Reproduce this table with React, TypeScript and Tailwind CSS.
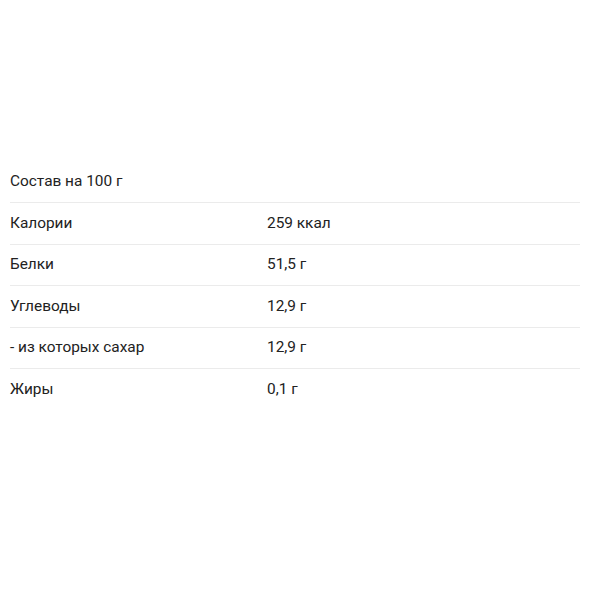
const rows: [string, string][] = [
  ["Калории", "259 ккал"],
  ["Белки", "51,5 г"],
  ["Углеводы", "12,9 г"],
  ["- из которых сахар", "12,9 г"],
  ["Жиры", "0,1 г"],
];

export default function App() {
  return (
    <div className="w-[600px] h-[600px] bg-white font-['Roboto',sans-serif] text-[15.4px] text-[#222]">
      <div className="pt-[161px] px-[10px] w-[590px]">
        <div className="h-[42px] flex items-center border-b border-[#ebebeb]">
          Состав на 100 г
        </div>
        {rows.map(([name, value], i) => (
          <div
            key={name}
            className={
              "h-[41.5px] grid grid-cols-[257px_1fr] items-center" +
              (i < rows.length - 1 ? " border-b border-[#ebebeb]" : "")
            }
          >
            <span>{name}</span>
            <span>{value}</span>
          </div>
        ))}
      </div>
    </div>
  );
}
